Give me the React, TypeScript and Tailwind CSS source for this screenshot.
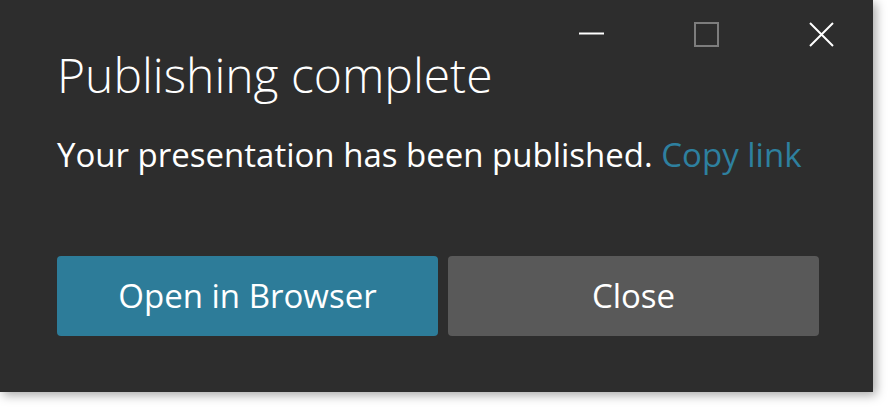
export default function App() {
  return (
    <div className="w-[888px] h-[407px] bg-white">
      <div
        className="relative w-[873px] h-[392px] bg-[#2d2d2d] shadow-[3px_3px_10px_rgba(0,0,0,0.35)] text-white"
        style={{ fontFamily: '"Open Sans", "Noto Sans", sans-serif' }}
      >
        {/* window controls */}
        <div className="absolute top-[22px] right-[39px] flex items-center gap-[90px]">
          <svg width="25" height="25" viewBox="0 0 25 25">
            <line x1="0" y1="11.5" x2="25" y2="11.5" stroke="#ffffff" strokeWidth="2" />
          </svg>
          <svg width="25" height="25" viewBox="0 0 25 25">
            <rect x="1" y="1" width="23" height="23" fill="none" stroke="#7d7d7d" strokeWidth="2" />
          </svg>
          <svg width="25" height="25" viewBox="0 0 25 25">
            <path d="M1 1 L24 24 M24 1 L1 24" stroke="#ffffff" strokeWidth="2" />
          </svg>
        </div>

        <div className="pl-[57px] pt-[45px]">
          <h1 className="text-[48px] font-light leading-[60px]">Publishing complete</h1>
          <p className="mt-[28px] text-[33px] leading-[44px]">
            Your presentation has been published.{" "}
            <span className="text-[#2e809f]">Copy link</span>
          </p>
        </div>

        <div className="flex gap-[10px] pl-[57px] mt-[79px]">
          <button className="w-[381px] h-[80px] rounded-[4px] bg-[#2d7c99] text-[33px] text-white">
            Open in Browser
          </button>
          <button className="w-[371px] h-[80px] rounded-[4px] bg-[#595959] text-[33px] text-white">
            Close
          </button>
        </div>
      </div>
    </div>
  );
}
